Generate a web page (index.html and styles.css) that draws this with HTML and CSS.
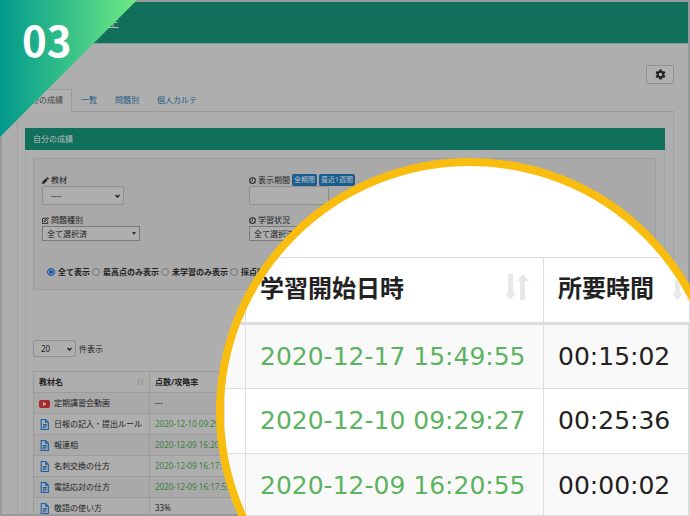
FILE: index.html
```html
<!DOCTYPE html>
<html lang="ja">
  <head>
    <meta charset="UTF-8" />
    <meta name="viewport" content="width=device-width, initial-scale=1.0" />
    <title>自分の成績</title>
    <link rel="stylesheet" href="styles.css" />
  </head>
  <body>
    <!-- icons -->
    <svg class="sprite" aria-hidden="true">
      <symbol id="doc" viewBox="0 0 16 20">
        <path d="M2 1h8l5 5v13H2zM10 1v5h5M5 10h7M5 13h7M5 16h5" fill="none" stroke="currentColor" stroke-width="2" />
      </symbol>
      <symbol id="clock" viewBox="0 0 16 16">
        <circle cx="8" cy="8" r="6.500" fill="none" stroke="currentColor" stroke-width="2.400" />
        <path d="M8 4v5H5" fill="none" stroke="currentColor" stroke-width="1.500" />
      </symbol>
      <symbol id="sort" viewBox="0 0 24 26">
        <path d="M3 0h5v19h3l-5.500 7L0 19h3zM15 26V7h-3l6-7 6 7h-4v19z" fill="currentColor" />
      </symbol>
    </svg>

    <div class="stage">
      <div class="app">
        <header class="topbar"><span>生</span></header>

        <div class="toolbar">
          <button class="gear" type="button" aria-label="設定">
            <svg viewBox="0 0 24 24">
              <path fill="currentColor" fill-rule="evenodd" d="M9.500 1h5l.6 3.300 2 1.100 3.100-1.100 2.500 4.300-2.600 2.200v2.400l2.600 2.200-2.500 4.300-3.100-1.100-2 1.100-.6 3.300h-5l-.6-3.300-2-1.100-3.100 1.100-2.500-4.300 2.600-2.200v-2.400L1.300 8.600l2.500-4.300 3.100 1.100 2-1.100zM12 8a4 4 0 1 0 0 8 4 4 0 0 0 0-8z" />
            </svg>
          </button>
        </div>

        <nav class="tabs">
          <a href="#" class="active">自分の成績</a>
          <a href="#">一覧</a>
          <a href="#">問題別</a>
          <a href="#">個人カルテ</a>
        </nav>

        <main class="tab-content">
          <section class="panel">
            <h1>自分の成績</h1>
            <div class="panel-body">
              <form class="filters">
                <div class="field">
                  <label for="material">
                    <svg viewBox="0 0 16 16"><path fill="currentColor" d="M0 16l1-5 8-8 4 4-8 8zM10 2l2-2 4 4-2 2z" /></svg>教材
                  </label>
                  <select id="material" class="select-sm"><option>----</option></select>
                </div>
                <div class="field">
                  <div class="label-row">
                    <label for="period"><svg><use href="#clock" /></svg>表示期間</label>
                    <button type="button">全期間</button>
                    <button type="button">直近1週間</button>
                  </div>
                  <input id="period" type="text" />
                </div>
                <div class="field">
                  <label for="kind">
                    <svg viewBox="0 0 16 16"><path fill="none" stroke="currentColor" stroke-width="2" d="M10 3H1v12h12V9M5 11l1-3 7-7 2 2-7 7z" /></svg>問題種別
                  </label>
                  <select id="kind" class="multi"><option>全て選択済</option></select>
                </div>
                <div class="field">
                  <label for="status"><svg><use href="#clock" /></svg>学習状況</label>
                  <select id="status" class="multi"><option>全て選択済</option></select>
                </div>
                <div class="radios">
                  <label><input type="radio" name="show" checked />全て表示</label>
                  <label><input type="radio" name="show" />最高点のみ表示</label>
                  <label><input type="radio" name="show" />未学習のみ表示</label>
                  <label><input type="radio" name="show" />採点待</label>
                </div>
              </form>

              <div class="length">
                <select id="length"><option>20</option></select>
                <label for="length">件表示</label>
              </div>

              <table class="results">
                <thead>
                  <tr>
                    <th><div class="th">教材名<svg><use href="#sort" /></svg></div></th>
                    <th>点数/攻略率</th>
                  </tr>
                </thead>
                <tbody>
                  <tr>
                    <td>
                      <svg class="video" viewBox="0 0 22 16"><rect width="22" height="16" rx="4" fill="#a82a2c" /><path d="M8 4l7 4-7 4z" fill="#bbb" /></svg>定期講習会動画
                    </td>
                    <td>---</td>
                  </tr>
                  <tr>
                    <td><svg class="doc"><use href="#doc" /></svg>日報の記入・提出ルール</td>
                    <td class="date">2020-12-10 09:29:27</td>
                  </tr>
                  <tr>
                    <td><svg class="doc"><use href="#doc" /></svg>報連相</td>
                    <td class="date">2020-12-09 16:20:55</td>
                  </tr>
                  <tr>
                    <td><svg class="doc"><use href="#doc" /></svg>名刺交換の仕方</td>
                    <td class="date">2020-12-09 16:17:55</td>
                  </tr>
                  <tr>
                    <td><svg class="doc"><use href="#doc" /></svg>電話応対の仕方</td>
                    <td class="date">2020-12-09 16:17:55</td>
                  </tr>
                  <tr>
                    <td><svg class="doc"><use href="#doc" /></svg>敬語の使い方</td>
                    <td>33%</td>
                  </tr>
                </tbody>
              </table>
            </div>
          </section>
        </main>
      </div>

      <!-- magnified part of the table -->
      <div class="lens">
        <table>
          <thead>
            <tr>
              <th></th>
              <th><div class="th">学習開始日時<svg><use href="#sort" /></svg></div></th>
              <th><div class="th">所要時間<svg><use href="#sort" /></svg></div></th>
            </tr>
          </thead>
          <tbody>
            <tr><td></td><td class="date">2020-12-17 15:49:55</td><td>00:15:02</td></tr>
            <tr><td></td><td class="date">2020-12-10 09:29:27</td><td>00:25:36</td></tr>
            <tr><td></td><td class="date">2020-12-09 16:20:55</td><td>00:00:02</td></tr>
          </tbody>
        </table>
      </div>

      <div class="step"><span>03</span></div>
    </div>
  </body>
</html>
```

FILE: styles.css
```css
* {
  margin: 0;
  padding: 0;
  box-sizing: border-box;
}

body {
  font-family: "Noto Sans", "Noto Sans CJK JP", sans-serif;
  font-size: 8px;
  line-height: 12px;
  color: #222;
}

button,
input,
select {
  font: inherit;
  color: inherit;
}

.sprite {
  display: none;
}

.stage {
  position: relative;
  height: 100vh;
  overflow: hidden;
}

.app {
  height: 100%;
  overflow: hidden;
  background-color: #aeaeae;
  border: 2px solid #999;
}

.topbar {
  height: 42px;
  padding-left: 105px;
  display: flex;
  align-items: center;
  background-color: #10705c;
  border-bottom: 1px solid #7f9f98;
  color: #b5bdb9;
  font-size: 12px;
}

.toolbar {
  display: flex;
  justify-content: flex-end;
  padding: 21px 14px 0 0;
}

.gear {
  width: 28px;
  height: 19px;
  display: flex;
  align-items: center;
  justify-content: center;
  background: #b0b0b0;
  border: 1px solid #8f8f8f;
  border-radius: 2px;
}

.gear svg {
  width: 11px;
  height: 11px;
}

.tabs {
  display: flex;
  margin: 5px 14px 0 15px;
  height: 23px;
  border-bottom: 1px solid #9c9c9c;
}

.tabs a {
  height: 23px;
  padding: 5px 9px 0;
  color: #235a80;
  text-decoration: none;
}

.tabs .active {
  padding: 4px 8px 0 5px;
  color: #444;
  background-color: #b0b0b0;
  border: 1px solid #9c9c9c;
  border-bottom: none;
}

.tab-content {
  margin: 0 14px 0 15px;
  padding: 16px 8px 0 7px;
  border: 1px solid #a0a0a0;
  border-top: none;
}

.panel {
  border: 1px solid #9cabaa;
  border-top: none;
}

.panel h1 {
  margin: 0 -1px;
  padding: 5px 8px;
  background-color: #10705c;
  color: #b9bfbd;
  font-size: 8px;
  font-weight: 400;
}

.panel-body {
  padding: 8px 8px 8px 7px;
}

.filters {
  display: grid;
  grid-template-columns: 207px 1fr;
  row-gap: 9px;
  height: 132px;
  padding: 15px 8px;
  align-content: start;
  background-color: #a9a9a9;
  border: 1px solid #9e9e9e;
  border-radius: 2px;
}

.field label {
  display: flex;
  align-items: center;
  gap: 2px;
  height: 12px;
}

.field svg {
  width: 7px;
  height: 7px;
}

.label-row {
  display: flex;
  gap: 2px;
}

.label-row button {
  height: 12px;
  padding: 0 2px;
  background-color: #1c5c8b;
  border: none;
  border-radius: 2px;
  color: #b8c4cc;
  line-height: 12px;
  font-size: 7px;
}

select,
input[type="text"] {
  display: block;
  appearance: none;
  background-color: #aeaeae;
  border: 1px solid #8f8f8f;
  border-radius: 2px;
}

select {
  background-repeat: no-repeat;
  background-position: right 3px center;
  background-size: 5px 4px;
  background-image: url("data:image/svg+xml,%3Csvg xmlns='http://www.w3.org/2000/svg' viewBox='0 0 10 8'%3E%3Cpath d='M1 2l4 4 4-4' fill='none' stroke='%23222' stroke-width='3'/%3E%3C/svg%3E");
}

.select-sm {
  width: 82px;
  height: 19px;
  padding-left: 8px;
}

input[type="text"] {
  width: 80px;
  height: 19px;
}

.multi {
  width: 98px;
  height: 15px;
  padding-left: 4px;
  border-color: #7a7a7a;
  border-radius: 0;
  background-size: 4px 3px;
  background-image: url("data:image/svg+xml,%3Csvg xmlns='http://www.w3.org/2000/svg' viewBox='0 0 8 6'%3E%3Cpath d='M0 0h8l-4 6z' fill='%23333'/%3E%3C/svg%3E");
}

.radios {
  grid-column: 1 / -1;
  display: flex;
  gap: 2px;
  padding: 16px 0 0 5px;
  font-weight: 700;
  white-space: nowrap;
}

.radios label {
  display: flex;
  align-items: center;
  gap: 3px;
}

.radios input {
  appearance: none;
  width: 8px;
  height: 8px;
  border: 1px solid #777;
  border-radius: 50%;
}

.radios input:checked {
  border-color: #0c51a5;
  background-color: #0c51a5;
  box-shadow: inset 0 0 0 1px #aeaeae;
}

.length {
  display: flex;
  align-items: center;
  gap: 3px;
  padding: 50px 0 14px;
}

.length select {
  width: 43px;
  height: 17px;
  padding-left: 7px;
}

.results {
  width: 100%;
  table-layout: fixed;
  border-collapse: collapse;
}

.results th,
.results td {
  height: 21px;
  padding: 0 5px;
  border: 1px solid #9c9c9c;
  text-align: left;
  white-space: nowrap;
}

.results th:first-child {
  width: 116px;
}

.results tbody tr:nth-child(odd) {
  background-color: #a9a9a9;
}

.results .date {
  color: #397f3b;
}

.results td svg {
  display: inline-block;
  vertical-align: middle;
  margin-right: 5px;
}

.results .video {
  width: 11px;
  height: 8px;
  margin-right: 4px;
}

.results .doc {
  width: 9px;
  height: 11px;
  margin-left: 1px;
  color: #1c5fa6;
}

.th {
  display: flex;
  align-items: center;
  justify-content: space-between;
}

.results .th svg {
  width: 7px;
  height: 8px;
  color: #989898;
}

.lens {
  position: absolute;
  left: 216px;
  top: 158px;
  width: 508px;
  height: 508px;
  padding-top: 91px;
  overflow: hidden;
  background-color: #fff;
  border: 8px solid #f9bd10;
  border-radius: 50%;
}

.lens table {
  width: 466px;
  table-layout: fixed;
  border-collapse: collapse;
  color: #222;
  font-family: "DejaVu Sans", "Noto Sans CJK JP", sans-serif;
  font-size: 25px;
  line-height: 32px;
}

.lens th,
.lens td {
  height: 65px;
  padding: 0 14px;
  border: 1px solid #ddd;
  text-align: left;
  white-space: nowrap;
}

.lens th {
  height: 66px;
  padding-bottom: 6px;
  font-family: "Noto Sans CJK JP", sans-serif;
  font-size: 24px;
  border-bottom: 3px solid #ddd;
}

.lens th:nth-child(1) {
  width: 21px;
  padding: 0;
}

.lens td:nth-child(1) {
  padding: 0;
}

.lens th:nth-child(2) {
  width: 298px;
}

.lens th:nth-child(3) {
  padding-right: 0;
}

.lens th:nth-child(3) .th {
  justify-content: flex-start;
  gap: 18px;
}

.lens td:last-child {
  border-right: 2px solid #ddd;
}

.lens tbody tr:last-child td {
  height: 62px;
  padding-top: 3px;
  border-bottom: 2px solid #ddd;
}

.lens tbody tr:nth-child(odd) {
  background-color: #f9f9f9;
}

.lens .date {
  color: #5cb35f;
}

.lens .th svg {
  flex-shrink: 0;
  width: 24px;
  height: 26px;
  color: #e8e8e8;
}

.step {
  position: absolute;
  left: 0;
  top: 0;
  width: 137px;
  height: 137px;
  padding: 9px 0 0 22px;
  background: linear-gradient(to right, #00998c, #70ea85);
  clip-path: polygon(0 0, 100% 0, 0 100%);
  color: #fff;
  font-family: "Noto Sans CJK JP", sans-serif;
  font-size: 42px;
  font-weight: 700;
  line-height: 60px;
}
```
